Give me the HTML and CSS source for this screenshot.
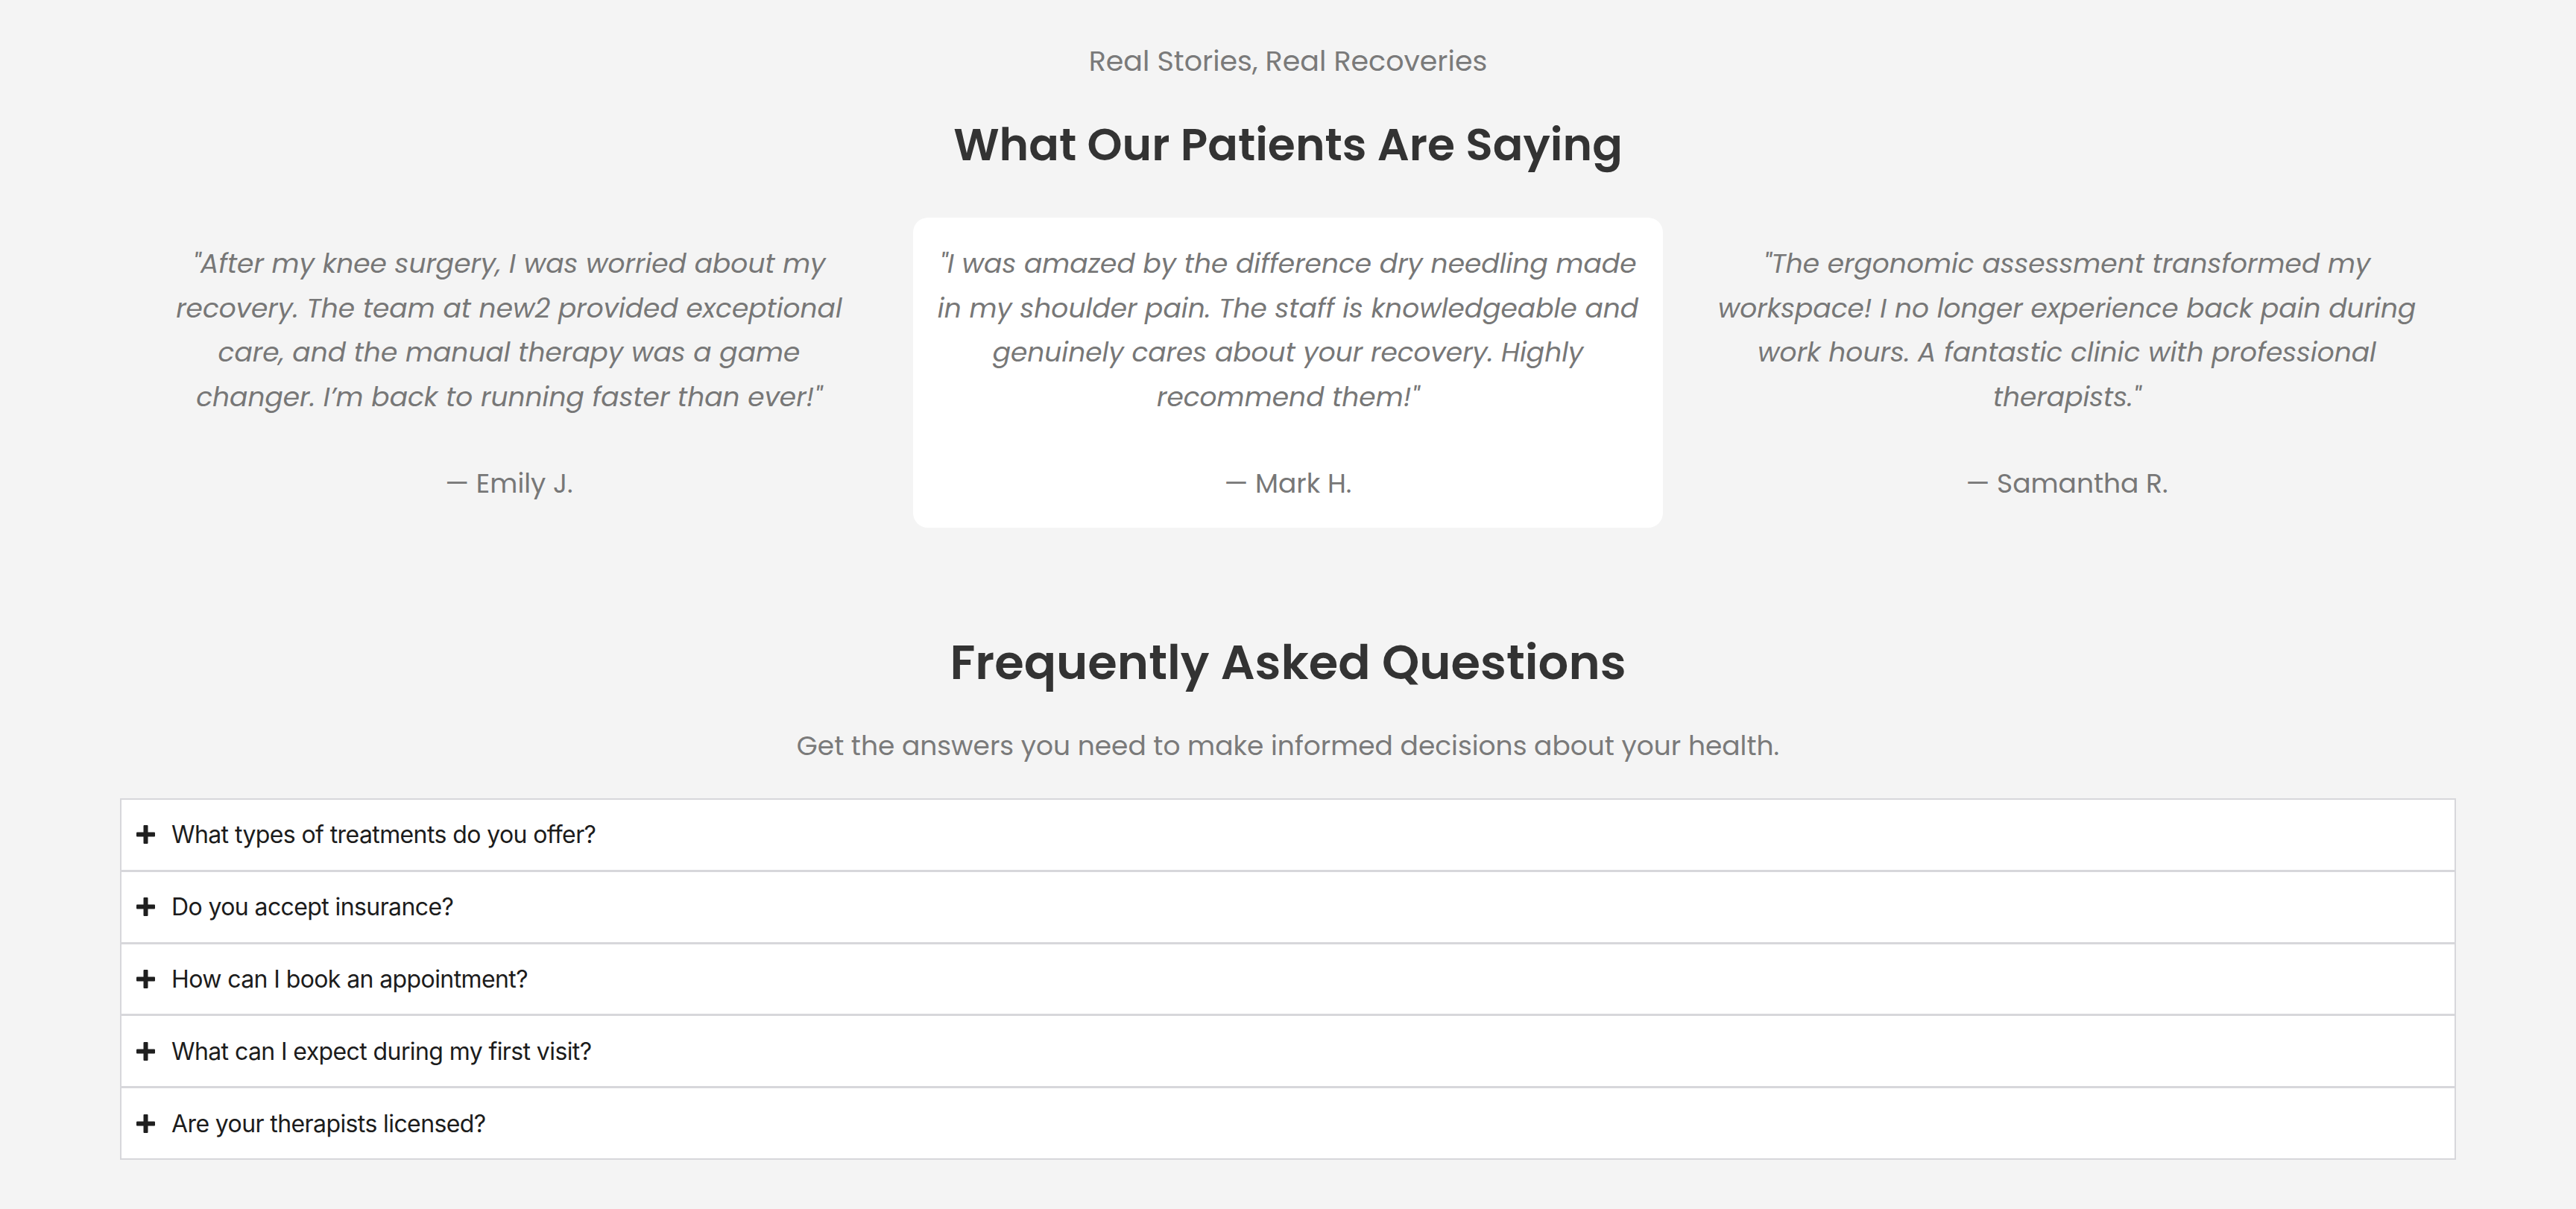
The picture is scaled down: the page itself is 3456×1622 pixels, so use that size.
FILE: index.html
```html
<!DOCTYPE html>
<html lang="en">
<head>
<meta charset="utf-8">
<title>Testimonials &amp; FAQ</title>
<link rel="stylesheet" href="styles.css">
</head>
<body>
<main class="page">
  <section class="testimonials">
    <p class="eyebrow">Real Stories, Real Recoveries</p>
    <h2 class="section-title">What Our Patients Are Saying</h2>
    <div class="testimonial-grid">
      <figure class="testimonial">
        <blockquote class="quote">"After my knee surgery, I was worried about my recovery. The team at new2 provided exceptional care, and the manual therapy was a game changer. I’m back to running faster than ever!"</blockquote>
        <figcaption class="author">— Emily J.</figcaption>
      </figure>
      <figure class="testimonial testimonial--active">
        <blockquote class="quote">"I was amazed by the difference dry needling made in my shoulder pain. The staff is knowledgeable and genuinely cares about your recovery. Highly recommend them!"</blockquote>
        <figcaption class="author">— Mark H.</figcaption>
      </figure>
      <figure class="testimonial">
        <blockquote class="quote">"The ergonomic assessment transformed my workspace! I no longer experience back pain during work hours. A fantastic clinic with professional therapists."</blockquote>
        <figcaption class="author">— Samantha R.</figcaption>
      </figure>
    </div>
  </section>

  <section class="faq">
    <h2 class="faq-title">Frequently Asked Questions</h2>
    <p class="faq-sub">Get the answers you need to make informed decisions about your health.</p>
    <div class="faq-list">
      <button class="faq-item" type="button">
        <svg class="plus" viewBox="0 0 25 25" aria-hidden="true"><rect x="0" y="9.5" width="25" height="6" rx="1"/><rect x="9.5" y="0" width="6" height="25" rx="1"/></svg>
        <span>What types of treatments do you offer?</span>
      </button>
      <button class="faq-item" type="button">
        <svg class="plus" viewBox="0 0 25 25" aria-hidden="true"><rect x="0" y="9.5" width="25" height="6" rx="1"/><rect x="9.5" y="0" width="6" height="25" rx="1"/></svg>
        <span>Do you accept insurance?</span>
      </button>
      <button class="faq-item" type="button">
        <svg class="plus" viewBox="0 0 25 25" aria-hidden="true"><rect x="0" y="9.5" width="25" height="6" rx="1"/><rect x="9.5" y="0" width="6" height="25" rx="1"/></svg>
        <span>How can I book an appointment?</span>
      </button>
      <button class="faq-item" type="button">
        <svg class="plus" viewBox="0 0 25 25" aria-hidden="true"><rect x="0" y="9.5" width="25" height="6" rx="1"/><rect x="9.5" y="0" width="6" height="25" rx="1"/></svg>
        <span>What can I expect during my first visit?</span>
      </button>
      <button class="faq-item" type="button">
        <svg class="plus" viewBox="0 0 25 25" aria-hidden="true"><rect x="0" y="9.5" width="25" height="6" rx="1"/><rect x="9.5" y="0" width="6" height="25" rx="1"/></svg>
        <span>Are your therapists licensed?</span>
      </button>
    </div>
  </section>
</main>
</body>
</html>
```

FILE: styles.css
```css
* { box-sizing: border-box; }

html, body {
  margin: 0;
  padding: 0;
  background: #f4f4f4;
}

body {
  font-family: "Poppins", "Open Sans", "Noto Sans", sans-serif;
  color: #777777;
}

.page {
  padding: 55px 161px 68px;
}

.testimonials {
  display: flex;
  flex-direction: column;
  align-items: center;
}

.eyebrow {
  margin: 0;
  font-size: 38px;
  line-height: 54px;
  font-weight: 400;
  color: #7a7a7a;
}

.section-title {
  margin: 47px 0 0;
  font-size: 60px;
  line-height: 77px;
  font-weight: 600;
  color: #333333;
}

.testimonial-grid {
  width: 3096px;
  margin-top: 59px;
  display: grid;
  grid-template-columns: repeat(3, 1fr);
  gap: 39px;
}

.testimonial {
  margin: 0;
  padding: 32px;
  border-radius: 20px;
  text-align: center;
}

.testimonial--active {
  background: #ffffff;
}

.quote {
  margin: 0 0 60px;
  font-size: 36px;
  line-height: 59.5px;
  font-style: italic;
  color: #777777;
}

.author {
  font-size: 36px;
  line-height: 54px;
  color: #777777;
}

.faq {
  margin-top: 142px;
  display: flex;
  flex-direction: column;
  align-items: center;
}

.faq-title {
  margin: 0;
  font-size: 64px;
  line-height: 77px;
  font-weight: 600;
  color: #333333;
}

.faq-sub {
  margin: 47px 0 43px;
  font-size: 36px;
  line-height: 54px;
  color: #7a7a7a;
}

.faq-list {
  width: 100%;
  display: flex;
  flex-direction: column;
}

.faq-item {
  display: flex;
  align-items: center;
  gap: 22px;
  width: 100%;
  height: 97.8px;
  margin: -1px 0 0;
  padding: 0 20px;
  background: #ffffff;
  border: 2px solid #d7d7db;
  font-family: "Inter", "Roboto", sans-serif;
  font-size: 32px;
  letter-spacing: -0.6px;
  color: #1c1c1c;
  text-align: left;
  cursor: pointer;
}

.faq-item:first-child {
  margin-top: 0;
}

.plus {
  width: 25px;
  height: 25px;
  flex: none;
  fill: #1f1f1f;
}
```
